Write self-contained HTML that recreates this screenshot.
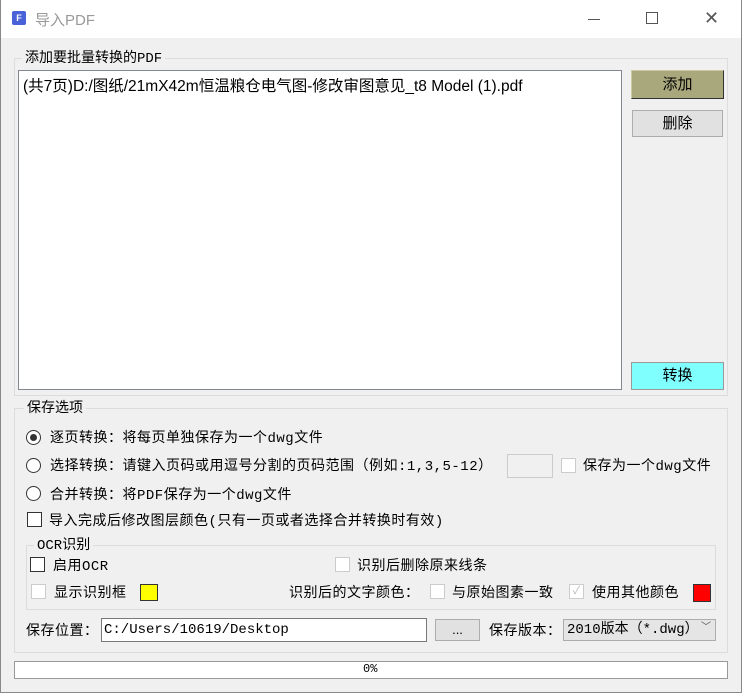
<!DOCTYPE html><html><head><meta charset="utf-8"><style>
*{box-sizing:border-box;margin:0;padding:0}
body{width:742px;height:693px;background:#f0f0f0;font-family:"Liberation Sans","Noto Sans CJK SC",sans-serif;font-size:13px;color:#000;position:relative;overflow:hidden}
.a{position:absolute}
.s{font-family:"Liberation Mono","WenQuanYi Zen Hei",monospace;font-size:14px;letter-spacing:0.5px;white-space:nowrap;line-height:16px}
.grp{position:absolute;border:1px solid #dcdcdc}
.lg{position:absolute;background:#f0f0f0;padding:0 3px;font-family:"Liberation Mono","WenQuanYi Zen Hei",monospace;font-size:14px;line-height:16px}
.cb{position:absolute;width:15px;height:15px;border:1px solid #333;background:#fff}
.cbd{position:absolute;width:15px;height:15px;border:1px solid #ccc;background:#fff}
.rd{position:absolute;width:15px;height:15px;border:1px solid #333;border-radius:50%;background:#fff}
.btn{position:absolute;border:1px solid #adadad;background:#e1e1e1;text-align:center;font-family:"WenQuanYi Zen Hei",sans-serif;font-size:15px}
</style></head><body>
<div class="a" style="left:0;top:0;width:742px;height:38px;background:#fff"></div>
<div class="a" style="left:0;top:0;width:1px;height:693px;background:#888"></div>
<div class="a" style="left:741px;top:0;width:1px;height:693px;background:#888"></div>
<div class="a" style="left:0;top:692px;width:742px;height:1px;background:#888"></div>
<div class="a" style="left:12px;top:11px;width:14px;height:14px;background:#4a62d8;border-radius:2px;color:#fff;font-size:9px;font-weight:bold;line-height:14px;text-align:center">F</div>
<div class="a" style="left:35px;top:9px;font-size:15px;color:#999">导入PDF</div>
<div class="a" style="left:588px;top:19px;width:12px;height:1px;background:#555"></div>
<div class="a" style="left:646px;top:12px;width:12px;height:12px;border:1px solid #555"></div>
<div class="a" style="left:704px;top:9px;font-size:18px;color:#555;line-height:18px">✕</div>

<div class="grp" style="left:14px;top:58px;width:714px;height:338px"></div>
<div class="lg" style="left:22px;top:51px">添加要批量转换的PDF</div>
<div class="a" style="left:18px;top:70px;width:604px;height:320px;background:#fff;border:1px solid #828790"></div>
<div class="a" style="left:23px;top:74px;font-size:15.5px">(共7页)D:/图纸/21mX42m恒温粮仓电气图-修改审图意见_t8 Model (1).pdf</div>
<div class="btn" style="left:631px;top:70px;width:93px;height:29px;background:#a9a87c;border:1px solid #333;border-top-color:#cdc9a0;border-left-color:#cdc9a0;line-height:27px">添加</div>
<div class="btn" style="left:632px;top:110px;width:91px;height:27px;line-height:25px">删除</div>
<div class="btn" style="left:631px;top:362px;width:93px;height:28px;background:#80ffff;border-color:#999;line-height:26px">转换</div>

<div class="grp" style="left:14px;top:408px;width:714px;height:245px"></div>
<div class="lg" style="left:24px;top:401px">保存选项</div>
<div class="rd" style="left:26px;top:430px"></div><div class="a" style="left:30px;top:434px;width:7px;height:7px;border-radius:50%;background:#333"></div>
<div class="a s" style="left:50px;top:431px">逐页转换：将每页单独保存为一个dwg文件</div>
<div class="rd" style="left:26px;top:458px"></div>
<div class="a s" style="left:50px;top:459px">选择转换：请键入页码或用逗号分割的页码范围（例如:1,3,5-12）</div>
<div class="a" style="left:507px;top:454px;width:46px;height:24px;border:1px solid #ccc;background:#f0f0f0"></div>
<div class="cbd" style="left:561px;top:458px"></div>
<div class="a s" style="left:583px;top:459px">保存为一个dwg文件</div>
<div class="rd" style="left:26px;top:486px"></div>
<div class="a s" style="left:50px;top:488px">合并转换：将PDF保存为一个dwg文件</div>
<div class="cb" style="left:27px;top:512px"></div>
<div class="a s" style="left:49px;top:514px">导入完成后修改图层颜色(只有一页或者选择合并转换时有效)</div>

<div class="grp" style="left:26px;top:545px;width:690px;height:65px"></div>
<div class="lg" style="left:34px;top:538px">OCR识别</div>
<div class="cb" style="left:30px;top:557px"></div>
<div class="a s" style="left:53px;top:559px">启用OCR</div>
<div class="cbd" style="left:335px;top:557px"></div>
<div class="a s" style="left:357px;top:559px">识别后删除原来线条</div>
<div class="cbd" style="left:31px;top:584px"></div>
<div class="a s" style="left:54px;top:586px">显示识别框</div>
<div class="a" style="left:140px;top:584px;width:18px;height:17px;background:#ff0;border:1px solid #333"></div>
<div class="a s" style="left:289px;top:586px">识别后的文字颜色：</div>
<div class="cbd" style="left:430px;top:584px"></div>
<div class="a s" style="left:452px;top:586px">与原始图素一致</div>
<div class="cbd" style="left:569px;top:584px;color:#bbb;font-size:11px;line-height:13px;text-align:center">✓</div>
<div class="a s" style="left:592px;top:586px">使用其他颜色</div>
<div class="a" style="left:693px;top:584px;width:18px;height:18px;background:#f00;border:1px solid #333"></div>

<div class="a s" style="left:26px;top:624px">保存位置：</div>
<div class="a s" style="left:101px;top:618px;width:326px;height:24px;background:#fff;border:1px solid #7a7a7a;padding:3px 2px;letter-spacing:0">C:/Users/10619/Desktop</div>
<div class="btn" style="left:435px;top:619px;width:45px;height:22px;font-size:13px;line-height:20px">...</div>
<div class="a s" style="left:489px;top:624px">保存版本：</div>
<div class="a s" style="left:563px;top:619px;width:153px;height:22px;background:#e5e5e5;border:1px solid #adadad;padding:2px 3px;letter-spacing:0">2010版本（*.dwg）<span style="position:absolute;right:4px;top:1px;font-size:10px;color:#555">﹀</span></div>

<div class="a" style="left:14px;top:661px;width:714px;height:18px;background:#fff;border:1px solid #999"></div>
<div class="a" style="left:363px;top:662px;font-size:12px;font-family:'Liberation Mono',monospace">0%</div>
</body></html>
